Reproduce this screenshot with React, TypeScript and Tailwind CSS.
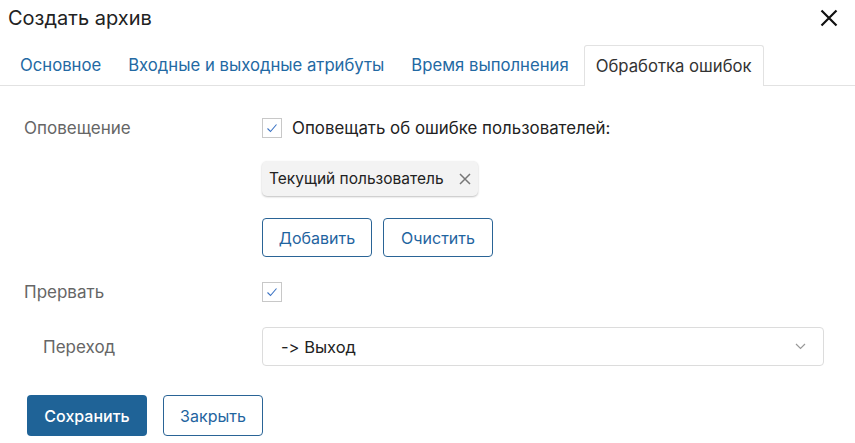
import React from 'react';

const tabs = ['Основное', 'Входные и выходные атрибуты', 'Время выполнения', 'Обработка ошибок'];

function Check() {
  return (
    <span className="flex h-[20px] w-[20px] items-center justify-center border border-[#c8c8c8] bg-white">
      <svg width="14" height="14" viewBox="0 0 14 14" fill="none">
        <path d="M2.5 7.5 L5.5 10.5 L11.5 3.5" stroke="#3b73c4" strokeWidth="1.1" />
      </svg>
    </span>
  );
}

export default function App() {
  return (
    <div className="h-[443px] w-[855px] bg-white font-['Inter',sans-serif] text-[17px] leading-[22px] text-[#222] [font-feature-settings:'calt'_0]">
      <div className="flex h-[35px] items-center justify-between pl-[8px] pr-[17px]">
        <span className="text-[20px] text-[#222]">Создать архив</span>
        <svg width="18" height="18" viewBox="0 0 18 18">
          <path d="M1.5 1.5 L16.5 16.5 M16.5 1.5 L1.5 16.5" stroke="#111" strokeWidth="2.2" />
        </svg>
      </div>

      <div className="mt-[10px] flex gap-[3px] border-b border-[#e2e2e2] pl-[8px] text-[16.7px]">
        {tabs.map((t, i) =>
          i === tabs.length - 1 ? (
            <div
              key={t}
              className="-mb-px flex h-[41px] items-center rounded-t-[3px] border border-b-0 border-[#e2e2e2] bg-white px-[11px] text-[#333]"
            >
              {t}
            </div>
          ) : (
            <div key={t} className="flex h-[40px] items-center px-[12px] text-[#2369a3]">
              {t}
            </div>
          )
        )}
      </div>

      <div className="flex flex-col pl-[24px]">
        <div className="mt-[31px] grid grid-cols-[238px_1fr] items-center">
          <span className="text-[#666]">Оповещение</span>
          <div className="flex items-center gap-[10px]">
            <Check />
            <span className="text-[16.85px]">Оповещать об ошибке пользователей:</span>
          </div>
        </div>

        <div className="mt-[22px] grid grid-cols-[238px_1fr]">
          <span />
          <div className="flex">
            <div className="flex h-[35px] items-center gap-[15px] rounded-[5px] bg-[#f3f3f3] pl-[7px] pr-[7px] shadow-[0_1px_2px_rgba(0,0,0,0.25)]">
              <span className="text-[15.5px]">Текущий пользователь</span>
              <svg width="12" height="12" viewBox="0 0 12 12">
                <path d="M1 1 L11 11 M11 1 L1 11" stroke="#777" strokeWidth="1.5" />
              </svg>
            </div>
          </div>
        </div>

        <div className="mt-[22px] grid grid-cols-[238px_1fr]">
          <span />
          <div className="flex gap-[11px] text-[16px]">
            <button className="h-[39px] w-[110px] rounded-[4px] border border-[#2a6496] text-[#1f64a0]">
              Добавить
            </button>
            <button className="h-[39px] w-[110px] rounded-[4px] border border-[#2a6496] text-[#1f64a0]">
              Очистить
            </button>
          </div>
        </div>

        <div className="mt-[24px] grid grid-cols-[238px_1fr] items-center">
          <span className="text-[#666]">Прервать</span>
          <Check />
        </div>

        <div className="mt-[24px] grid grid-cols-[238px_1fr] items-center">
          <span className="pl-[19px] text-[#666]">Переход</span>
          <div className="flex h-[39px] w-[562px] items-center justify-between rounded-[4px] border border-[#dcdcdc] pl-[18px] pr-[17px]">
            <span className="text-[16.5px]">-&gt; Выход</span>
            <svg width="11" height="7" viewBox="0 0 11 7" fill="none">
              <path d="M1 1 L5.5 5.5 L10 1" stroke="#999" strokeWidth="1.2" />
            </svg>
          </div>
        </div>
      </div>

      <div className="mt-[29px] flex gap-[16px] pl-[27px] text-[16px]">
        <button className="h-[41px] w-[120px] rounded-[4px] bg-[#1f6397] font-medium text-white">Сохранить</button>
        <button className="h-[41px] w-[100px] rounded-[4px] border border-[#2a6496] text-[#1f64a0]">Закрыть</button>
      </div>
    </div>
  );
}
